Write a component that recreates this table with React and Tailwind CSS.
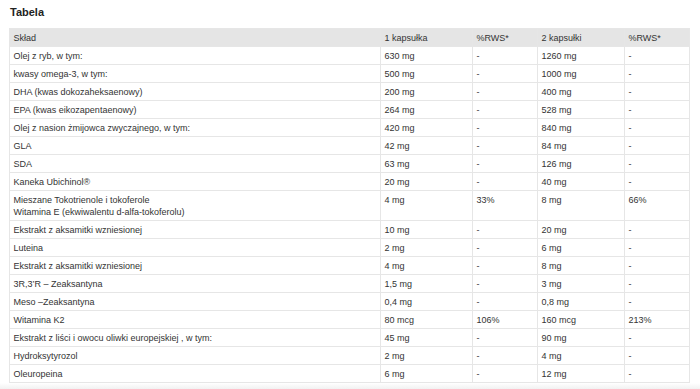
const rows = [
  ['Olej z ryb, w tym:', '630 mg', '-', '1260 mg', '-'],
  ['kwasy omega-3, w tym:', '500 mg', '-', '1000 mg', '-'],
  ['DHA (kwas dokozaheksaenowy)', '200 mg', '-', '400 mg', '-'],
  ['EPA (kwas eikozapentaenowy)', '264 mg', '-', '528 mg', '-'],
  ['Olej z nasion żmijowca zwyczajnego, w tym:', '420 mg', '-', '840 mg', '-'],
  ['GLA', '42 mg', '-', '84 mg', '-'],
  ['SDA', '63 mg', '-', '126 mg', '-'],
  ['Kaneka Ubichinol®', '20 mg', '-', '40 mg', '-'],
  [['Mieszane Tokotrienole i tokoferole', 'Witamina E (ekwiwalentu d-alfa-tokoferolu)'], '4 mg', '33%', '8 mg', '66%'],
  ['Ekstrakt z aksamitki wzniesionej', '10 mg', '-', '20 mg', '-'],
  ['Luteina', '2 mg', '-', '6 mg', '-'],
  ['Ekstrakt z aksamitki wzniesionej', '4 mg', '-', '8 mg', '-'],
  ['3R,3’R – Zeaksantyna', '1,5 mg', '-', '3 mg', '-'],
  ['Meso –Zeaksantyna', '0,4 mg', '-', '0,8 mg', '-'],
  ['Witamina K2', '80 mcg', '106%', '160 mcg', '213%'],
  ['Ekstrakt z liści i owocu oliwki europejskiej , w tym:', '45 mg', '-', '90 mg', '-'],
  ['Hydroksytyrozol', '2 mg', '-', '4 mg', '-'],
  ['Oleuropeina', '6 mg', '-', '12 mg', '-'],
];

const widths = ['w-[371px]', 'w-[92px]', 'w-[65px]', 'w-[87px]', 'w-[65px]'];
const cell = 'border border-[#e6e6e6] px-[3.5px] pt-[3px] pb-[2px] align-top text-left font-normal';

export default function App() {
  return (
    <div className="w-[700px] h-[389px] bg-white overflow-hidden text-[#333] font-['Liberation_Sans',Arial,sans-serif]">
      <h2 className="pl-[10px] pt-[5px] text-[11px] leading-[14px] font-bold text-[#222]">Tabela</h2>
      <table className="ml-[9px] mt-[9px] w-[680px] border-collapse table-fixed text-[9px] leading-[12px]">
        <thead>
          <tr className="bg-[#e5e5e5]">
            {['Skład', '1 kapsułka', '%RWS*', '2 kapsułki', '%RWS*'].map((h, i) => (
              <th key={i} className={`${cell} ${widths[i]} pt-[3.5px] pb-[2.5px]`}>{h}</th>
            ))}
          </tr>
        </thead>
        <tbody>
          {rows.map((r, i) => (
            <tr key={i} className="bg-white">
              {r.map((c, j) => (
                <td key={j} className={cell}>
                  {Array.isArray(c) ? c.map((line, k) => <div key={k}>{line}</div>) : c}
                </td>
              ))}
            </tr>
          ))}
        </tbody>
      </table>
      <div className="h-[10px] bg-gradient-to-b from-white to-[#e8e8e8]" />
    </div>
  );
}
